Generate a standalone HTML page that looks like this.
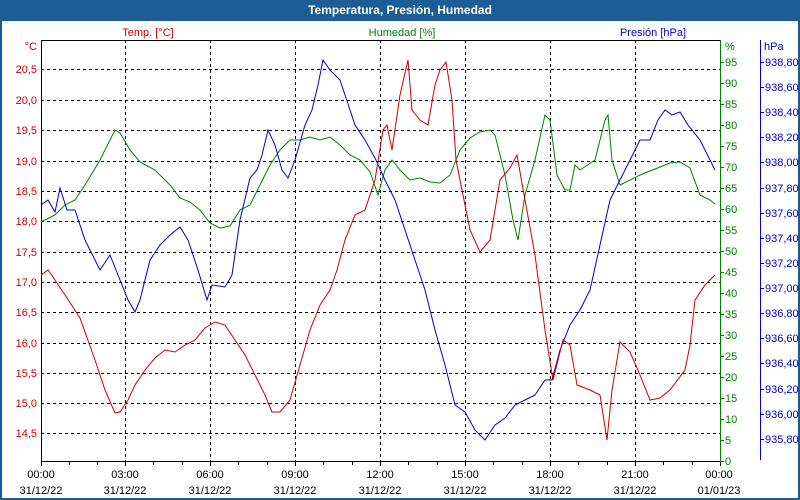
<!DOCTYPE html>
<html><head><meta charset="utf-8"><style>
html,body{margin:0;padding:0;background:#fff}
svg{display:block;font-family:"Liberation Sans",Tahoma,sans-serif;font-size:11px}
</style></head><body>
<svg width="800" height="500" viewBox="0 0 800 500" xmlns="http://www.w3.org/2000/svg">
<rect x="0" y="0" width="800" height="500" fill="#1d5d95"/>
<rect x="2" y="21" width="796" height="477" fill="#fff"/>
<text x="400" y="14" text-anchor="middle" fill="#fff" font-weight="bold" font-size="12">Temperatura, Presión, Humedad</text>
<g stroke="#000" stroke-dasharray="3,3" stroke-width="1">
<line x1="41" x2="720" y1="69.5" y2="69.5"/><line x1="41" x2="720" y1="100.5" y2="100.5"/><line x1="41" x2="720" y1="130.5" y2="130.5"/><line x1="41" x2="720" y1="161.5" y2="161.5"/><line x1="41" x2="720" y1="191.5" y2="191.5"/><line x1="41" x2="720" y1="221.5" y2="221.5"/><line x1="41" x2="720" y1="252.5" y2="252.5"/><line x1="41" x2="720" y1="282.5" y2="282.5"/><line x1="41" x2="720" y1="312.5" y2="312.5"/><line x1="41" x2="720" y1="343.5" y2="343.5"/><line x1="41" x2="720" y1="373.5" y2="373.5"/><line x1="41" x2="720" y1="403.5" y2="403.5"/><line x1="41" x2="720" y1="433.5" y2="433.5"/>
<line y1="40" y2="461" x1="125.5" x2="125.5"/><line y1="40" y2="461" x1="210.5" x2="210.5"/><line y1="40" y2="461" x1="295.5" x2="295.5"/><line y1="40" y2="461" x1="380.5" x2="380.5"/><line y1="40" y2="461" x1="465.5" x2="465.5"/><line y1="40" y2="461" x1="550.5" x2="550.5"/><line y1="40" y2="461" x1="635.5" x2="635.5"/>
</g>
<path d="M41.5 40.5H720.5M41.5 40V461.5H720.5" stroke="#000" fill="none"/>
<g stroke="#000"><path d="M41.5 461v5M69.5 461v4M97.5 461v4M125.5 461v5M153.5 461v4M182.5 461v4M210.5 461v5M238.5 461v4M267.5 461v4M295.5 461v5M323.5 461v4M352.5 461v4M380.5 461v5M408.5 461v4M437.5 461v4M465.5 461v5M493.5 461v4M522.5 461v4M550.5 461v5M578.5 461v4M607.5 461v4M635.5 461v5M663.5 461v4M692.5 461v4M720.5 461v5"/></g>
<path d="M720.5 40V461" stroke="#008000"/>
<g stroke="#008000"><path d="M720 62.5h4M720 83.5h4M720 104.5h4M720 125.5h4M720 146.5h4M720 167.5h4M720 188.5h4M720 209.5h4M720 230.5h4M720 251.5h4M720 272.5h4M720 293.5h4M720 314.5h4M720 335.5h4M720 356.5h4M720 377.5h4M720 398.5h4M720 419.5h4M720 440.5h4M720 461.5h4"/></g>
<path d="M760.5 40V460" stroke="#0000cc"/>
<g stroke="#0000cc"><path d="M760 62.5h4M760 87.5h4M760 112.5h4M760 137.5h4M760 162.5h4M760 188.5h4M760 213.5h4M760 238.5h4M760 263.5h4M760 288.5h4M760 313.5h4M760 338.5h4M760 363.5h4M760 389.5h4M760 414.5h4M760 439.5h4"/></g>
<g fill="#cc0000" text-anchor="end">
<text x="37" y="50">°C</text><text x="37" y="73">20,5</text><text x="37" y="104">20,0</text><text x="37" y="134">19,5</text><text x="37" y="165">19,0</text><text x="37" y="195">18,5</text><text x="37" y="225">18,0</text><text x="37" y="256">17,5</text><text x="37" y="286">17,0</text><text x="37" y="316">16,5</text><text x="37" y="347">16,0</text><text x="37" y="377">15,5</text><text x="37" y="407">15,0</text><text x="37" y="437">14,5</text>
</g>
<text x="148" y="36" fill="#cc0000" text-anchor="middle">Temp. [°C]</text>
<text x="402" y="36" fill="#008000" text-anchor="middle">Humedad [%]</text>
<text x="653" y="36" fill="#0000cc" text-anchor="middle">Presión [hPa]</text>
<g fill="#008000">
<text x="725" y="50">%</text><text x="725" y="66">95</text><text x="725" y="87">90</text><text x="725" y="108">85</text><text x="725" y="129">80</text><text x="725" y="150">75</text><text x="725" y="171">70</text><text x="725" y="192">65</text><text x="725" y="213">60</text><text x="725" y="234">55</text><text x="725" y="255">50</text><text x="725" y="276">45</text><text x="725" y="297">40</text><text x="725" y="318">35</text><text x="725" y="339">30</text><text x="725" y="360">25</text><text x="725" y="381">20</text><text x="725" y="402">15</text><text x="725" y="423">10</text><text x="725" y="444">5</text><text x="725" y="465">0</text>
</g>
<g fill="#0000cc">
<text x="764" y="50">hPa</text><text x="765" y="66">938,80</text><text x="765" y="91">938,60</text><text x="765" y="116">938,40</text><text x="765" y="141">938,20</text><text x="765" y="166">938,00</text><text x="765" y="192">937,80</text><text x="765" y="217">937,60</text><text x="765" y="242">937,40</text><text x="765" y="267">937,20</text><text x="765" y="292">937,00</text><text x="765" y="317">936,80</text><text x="765" y="342">936,60</text><text x="765" y="367">936,40</text><text x="765" y="393">936,20</text><text x="765" y="418">936,00</text><text x="765" y="443">935,80</text>
</g>
<g fill="#000" text-anchor="middle">
<text x="41" y="478">00:00</text><text x="41" y="494">31/12/22</text>
<text x="125" y="478">03:00</text><text x="125" y="494">31/12/22</text>
<text x="210" y="478">06:00</text><text x="210" y="494">31/12/22</text>
<text x="295" y="478">09:00</text><text x="295" y="494">31/12/22</text>
<text x="380" y="478">12:00</text><text x="380" y="494">31/12/22</text>
<text x="465" y="478">15:00</text><text x="465" y="494">31/12/22</text>
<text x="550" y="478">18:00</text><text x="550" y="494">31/12/22</text>
<text x="635" y="478">21:00</text><text x="635" y="494">31/12/22</text>
<text x="719" y="478">00:00</text><text x="719" y="494">01/01/23</text>
</g>
<polyline fill="none" stroke="#008000" stroke-width="1" points="41,222 55,215 65,205 75,200 85,185 100,160 115,130 120,133 130,150 140,162 155,170 170,185 180,198 190,202 200,210 210,223 220,228 230,226 240,210 250,205 260,185 270,165 280,150 290,140 300,140 310,137 320,140 330,137 340,145 350,155 360,160 370,172 378,195 385,170 392,160 400,170 410,180 420,178 430,182 440,183 450,175 460,150 470,138 480,132 490,130 495,135 505,175 513,220 518,240 525,195 535,160 545,115 550,120 557,175 565,190 570,190 575,165 580,170 595,160 605,120 608,115 612,160 620,185 640,175 660,167 670,163 680,162 690,168 700,195 710,200 715,204"/>
<polyline fill="none" stroke="#0000cc" stroke-width="1" points="41,205 48,200 55,212 60,188 67,210 75,210 85,240 100,270 110,255 118,275 128,300 135,312 140,300 150,260 160,245 170,235 180,227 188,240 198,270 207,300 212,285 225,287 232,275 240,220 250,178 257,170 262,155 268,130 275,145 282,170 288,178 295,160 305,125 312,110 318,85 323,60 330,70 340,80 345,95 355,125 365,140 375,158 385,180 395,200 405,230 415,260 425,290 435,330 445,365 455,405 465,412 475,430 485,440 495,425 505,418 515,405 525,400 535,395 545,380 552,380 560,350 570,325 580,310 590,290 600,245 610,200 620,180 630,160 640,140 650,140 658,120 665,110 672,115 680,112 688,125 700,140 710,160 715,170"/>
<polyline fill="none" stroke="#cc0000" stroke-width="1" points="41,275 48,270 55,280 65,295 80,318 95,360 105,390 115,413 120,412 128,400 135,385 145,370 155,358 165,350 175,352 185,345 195,340 205,328 215,322 225,325 235,340 245,355 255,375 265,395 272,412 280,412 290,400 300,365 310,330 320,305 330,290 337,270 345,240 355,215 365,210 375,180 383,130 387,125 392,150 400,95 408,60 412,110 420,120 428,125 435,85 440,70 446,62 452,100 456,160 462,190 470,230 480,252 490,240 500,180 510,168 517,155 525,200 535,255 545,330 553,380 563,340 570,345 577,385 590,390 600,395 607,440 612,390 620,342 630,352 640,375 650,400 660,398 670,390 685,370 690,345 695,300 705,285 715,275"/>
</svg>
</body></html>
